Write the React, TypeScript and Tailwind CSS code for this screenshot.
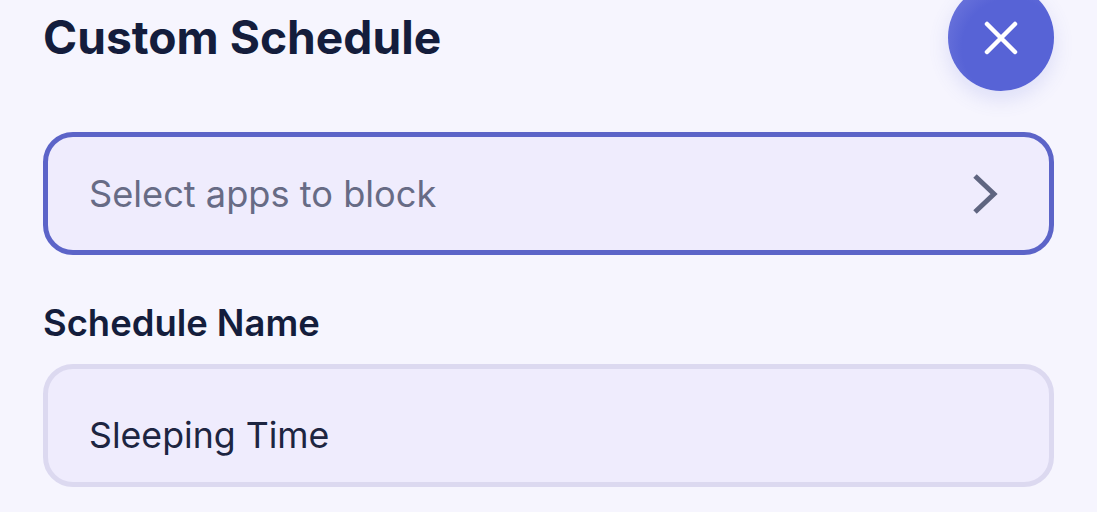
export default function App() {
  return (
    <div className="w-[1097px] h-[512px] overflow-hidden bg-[#f6f5fe] pl-[43px] pr-[43px] font-['Inter',sans-serif]">
      <div className="flex justify-between items-start h-[148px] -mt-[16px] pb-0">
        <h1 className="mt-[23px] text-[46.2px] leading-[60px] font-bold text-[#141d3c]">Custom Schedule</h1>
        <button className="flex items-center justify-center w-[106px] h-[107px] rounded-full bg-[radial-gradient(circle_at_60%_60%,#5763d6_55%,#6d76dc_85%)] shadow-[0_8px_20px_rgba(87,99,214,0.16)]">
          <svg width="34" height="34" viewBox="0 0 34 34" fill="none" stroke="#ffffff" strokeWidth="4.5" strokeLinecap="round">
            <path d="M3 3 L31 31 M31 3 L3 31" />
          </svg>
        </button>
      </div>
      <div className="flex items-center justify-between h-[123px] rounded-[30px] border-[5px] border-[#5c64c8] bg-[#efecfd] pl-[41px] pr-[51px]">
        <span className="relative top-px text-[36.2px] leading-none text-[#676b85]">Select apps to block</span>
        <svg width="26" height="40" viewBox="0 0 26 40" fill="none" stroke="#5f6580" strokeWidth="5">
          <path d="M3 2 L22 20 L3 38" />
        </svg>
      </div>
      <label className="block mt-[46px] text-[36.4px] leading-[44px] font-semibold text-[#141d3c]">Schedule Name</label>
      <div className="mt-[19px] flex items-end h-[123px] rounded-[30px] border-[5px] border-[#dcd9f0] bg-[#efecfd] pl-[41px] pb-[25px]">
        <span className="text-[35.7px] leading-[44px] text-[#1d2541]">Sleeping Time</span>
      </div>
    </div>
  );
}
